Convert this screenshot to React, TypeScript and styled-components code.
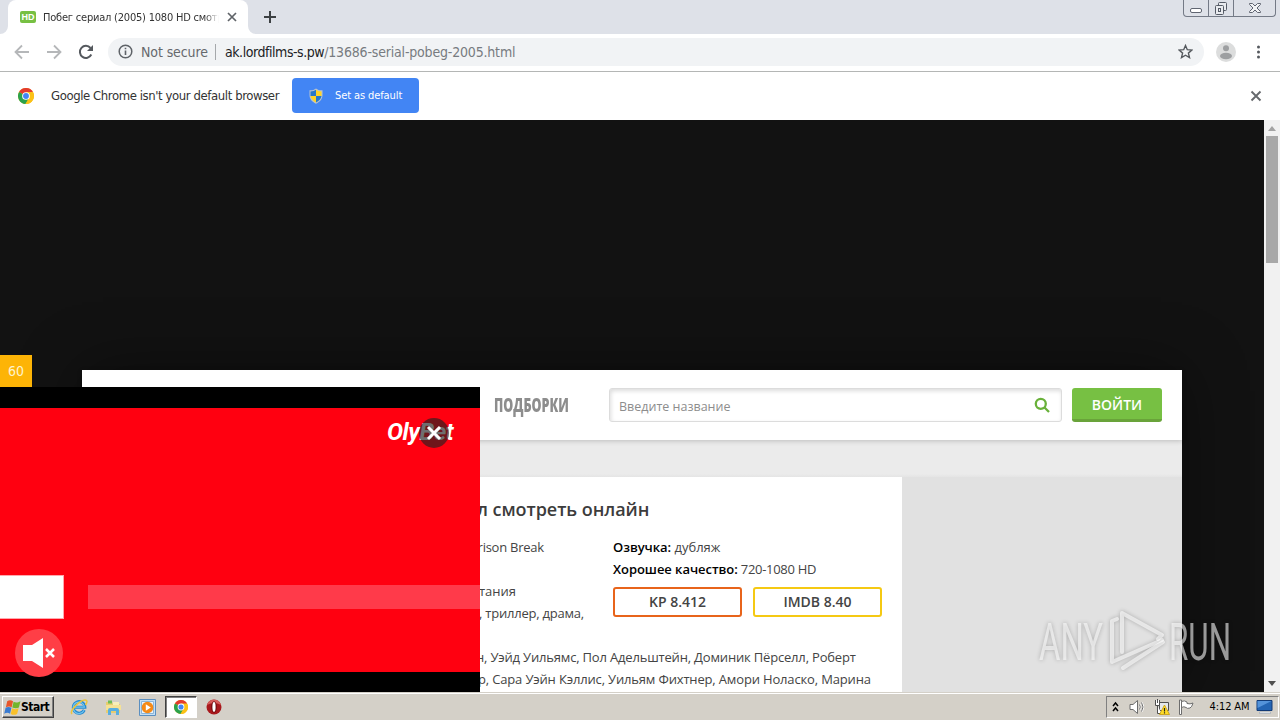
import React from 'react';
import styled, { createGlobalStyle, css } from 'styled-components';

const GlobalStyle = createGlobalStyle`
  * { box-sizing: border-box; }
  body {
    margin: 0;
    overflow: hidden;
    background: #111;
  }
`;

const uiFont = `'DejaVu Sans Condensed', 'DejaVu Sans', Tahoma, sans-serif`;
const siteFont = `'Open Sans', 'Noto Sans', sans-serif`;

const Screen = styled.div`
  position: relative;
  width: 1280px;
  height: 720px;
  display: flex;
  flex-direction: column;
  overflow: hidden;
  font-family: ${uiFont};
`;

const Label = styled.span<{ $size?: number; $spacing?: number; $color?: string }>`
  font-size: ${props => props.$size || 12}px;
  letter-spacing: ${props => props.$spacing || 0}px;
  color: ${props => props.$color || '#333'};
  white-space: nowrap;
`;

/* ---------- browser frame ---------- */

const TabStrip = styled.div`
  height: 34px;
  flex: none;
  display: flex;
  align-items: flex-start;
  background: #dee1e8;
`;

const TabCurve = styled.svg`
  width: 8px;
  height: 34px;
  flex: none;
`;

const Tab = styled.div`
  width: 240px;
  height: 34px;
  padding: 0 10px 0 12px;
  display: flex;
  align-items: center;
  background: #fff;
  border-radius: 8px 8px 0 0;
`;

const Favicon = styled.div`
  width: 16px;
  height: 12px;
  flex: none;
  margin-right: 7px;
  border-radius: 2px;
  background: #77c043;
  color: #fff;
  font: bold 9px/12px 'Liberation Sans', sans-serif;
  text-align: center;
`;

const TabTitle = styled.div`
  width: 176px;
  overflow: hidden;
  display: flex;
  mask-image: linear-gradient(90deg, #000 92%, transparent);
`;

const TabClose = styled.svg`
  margin-left: 8px;
  flex: none;
`;

const NewTab = styled.svg`
  margin: 11px 0 0 8px;
`;

const WindowControls = styled.div`
  display: flex;
  width: 93px;
  height: 17px;
  margin: 0 4px 0 auto;
  border: 1px solid #747a86;
  border-top: 0;
  border-radius: 0 0 4px 4px;
`;

const WindowButton = styled.div<{ $width: number }>`
  width: ${props => props.$width}px;
  display: flex;
  justify-content: center;
  border-right: 1px solid #747a86;

  &:last-child {
    border-right: 0;
  }
`;

const Toolbar = styled.div`
  height: 38px;
  flex: none;
  display: flex;
  align-items: center;
  padding: 0 14px 2px 14px;
  background: #fff;
  border-bottom: 1px solid #b4b6b5;
`;

const NavIcons = styled.div`
  display: flex;
  gap: 16px;
  width: 94px;
`;

const AddressBar = styled.div`
  width: 1096px;
  height: 28px;
  display: flex;
  align-items: center;
  padding: 0 11px 0 10px;
  border-radius: 14px;
  background: #f1f3f5;
`;

const Security = styled.div`
  width: 74px;
  margin-left: 8px;
  display: flex;
`;

const Divider = styled.div`
  width: 1px;
  height: 16px;
  margin-right: 9px;
  background: #a5a8ab;
`;

const Star = styled.svg`
  margin-left: auto;
`;

const Avatar = styled.svg`
  margin-left: 12px;
`;

const Menu = styled.svg`
  margin-left: 20px;
`;

const InfoBar = styled.div`
  height: 48px;
  flex: none;
  display: flex;
  align-items: center;
  padding: 0 18px 1px;
  background: #fff;
`;

const InfoText = styled.div`
  width: 258px;
  padding-left: 17px;
  display: flex;
`;

const DefaultButton = styled.button`
  width: 127px;
  height: 35px;
  padding: 0 0 0 17px;
  display: flex;
  align-items: center;
  gap: 12px;
  border: 0;
  border-radius: 4px;
  background: #4285f4;
  font-family: inherit;
`;

const InfoClose = styled.svg`
  margin-left: auto;
`;

/* ---------- site ---------- */

const Viewport = styled.div`
  position: relative;
  height: 572px;
  flex: none;
  display: flex;
  overflow: hidden;
  background: #121212;
`;

const Page = styled.div`
  flex: 1;
  padding: 250px 82px 0;
`;

const Site = styled.div`
  height: 322px;
  width: 1100px;
  background: #e1e1e1;
  font-family: ${siteFont};
  box-shadow: 0 0 60px rgba(0, 0, 0, 0.4);
`;

const SiteHeader = styled.div`
  position: relative;
  height: 70px;
  display: flex;
  align-items: center;
  padding-left: 412px;
  background: #fff;
  box-shadow: 0 1px 5px rgba(0, 0, 0, 0.2);
`;

const NavLink = styled.div`
  width: 115px;
  height: 28px;

  span {
    display: block;
    font: 800 19px/28px 'Open Sans', sans-serif;
    color: #8d8d8d;
    transform: scaleX(0.66);
    transform-origin: left;
    white-space: nowrap;
  }
`;

const SearchBox = styled.div`
  width: 453px;
  height: 34px;
  display: flex;
  align-items: center;
  justify-content: space-between;
  padding: 2px 11px 0 9px;
  border: 1px solid #dcdcdc;
  border-radius: 3px;
  background: #fff;
  box-shadow: inset 1px 2px 4px rgba(0, 0, 0, 0.14);

  svg {
    margin-bottom: 2px;
  }
`;

const LoginButton = styled.button`
  width: 90px;
  height: 34px;
  margin-left: 10px;
  padding: 2px 0 0;
  border: 0;
  border-bottom: 3px solid #69a33a;
  border-radius: 3px;
  background: #77c043;
  color: #fff;
  font: 600 14px/29px ${siteFont};
`;

const SubBar = styled.div`
  height: 37px;
  background: linear-gradient(#ebebeb 34px, #e4e4e4);
`;

const Article = styled.div`
  position: relative;
  width: 820px;
  height: 215px;
  padding: 19px 0 0 398px;
  background: #fff;
`;

const Title = styled.h1`
  margin: 0 0 14px -3px;
  font: 600 18px/26px ${siteFont};
  letter-spacing: -0.05px;
  color: #3c3c3c;
  white-space: nowrap;
`;

const Columns = styled.div`
  display: flex;
  height: 88px;
`;

const Column = styled.div<{ $width: number }>`
  width: ${props => props.$width}px;
`;

const Line = styled.div<{ $shift?: number; $spacing?: number }>`
  height: 22px;
  margin-left: ${props => props.$shift || 0}px;
  font-size: 13px;
  line-height: 22px;
  letter-spacing: ${props => props.$spacing || 0}px;
  color: #444;
  white-space: pre;

  b {
    font-weight: 600;
    letter-spacing: -0.05px;
    color: #000;
  }
`;

const Ratings = styled.div`
  display: flex;
  gap: 11px;
  margin-top: 7px;
`;

const Rating = styled.div<{ $color: string }>`
  width: 129px;
  height: 30px;
  border: 2px solid ${props => props.$color};
  border-radius: 3px;
  font: 600 14px/26px ${siteFont};
  color: #444;
  text-align: center;
`;

const Cast = styled.div`
  margin-top: 22px;
`;

const Scrollbar = styled.div`
  width: 16px;
  display: flex;
  flex-direction: column;
  align-items: center;
  background: #f1f1f1;
`;

const Thumb = styled.div`
  width: 12px;
  height: 127px;
  margin-bottom: auto;
  background: #a8a8a8;
`;

/* ---------- floating ad ---------- */

const Ad = styled.div`
  position: absolute;
  left: 0;
  bottom: 0;
  width: 480px;
`;

const Countdown = styled.div`
  width: 32px;
  height: 32px;
  background: #fdb406;
  color: #fff3cc;
  font: 14px/32px ${uiFont};
  text-align: center;
`;

const AdVideo = styled.div`
  position: relative;
  height: 305px;
  border-top: 21px solid #000;
  border-bottom: 20px solid #000;
  background: #ff0010;
`;

const AdStrip = styled.div`
  display: flex;
  align-items: center;
  gap: 24px;
  padding-top: 167px;
`;

const AdBox = styled.div`
  width: 64px;
  height: 44px;
  background: #fff;
  border: 1px solid #ffa8ad;
  border-left: 0;
`;

const AdBar = styled.div`
  flex: 1;
  height: 24px;
  background: #ff3a4a;
`;

const AdBrand = styled.div`
  position: absolute;
  top: 8px;
  left: 387px;
  color: #fff;
  font: italic bold 24px/32px Roboto, sans-serif;
  letter-spacing: -0.5px;
  white-space: nowrap;
`;

const AdClose = styled.svg`
  position: absolute;
  top: 10px;
  left: 419px;
`;

const Mute = styled.svg`
  position: absolute;
  left: 15px;
  bottom: -5px;
`;

const Watermark = styled.svg`
  position: absolute;
  right: 42px;
  top: 604px;
  overflow: visible;
  filter: drop-shadow(0 0 2px rgba(0, 0, 0, 0.4));

  text {
    font: 400 52px Roboto, sans-serif;
  }
`;

/* ---------- taskbar ---------- */

const Taskbar = styled.div`
  height: 28px;
  flex: none;
  display: flex;
  align-items: center;
  padding: 2px 1px 0 2px;
  background: #d4d0c8;
  box-shadow: inset 0 1px #d4d0c8, inset 0 2px #fff;
`;

const raised = css`
  border: 1px solid;
  border-color: #fff #404040 #404040 #fff;
  box-shadow: inset -1px -1px #808080;
`;

const StartButton = styled.div`
  width: 52px;
  height: 22px;
  display: flex;
  align-items: center;
  padding-left: 1px;
  ${raised}
  font: bold 12px/20px 'DejaVu Sans Condensed', sans-serif;
  letter-spacing: -0.5px;
  color: #000;
`;

const QuickLaunch = styled.div`
  display: flex;
  align-items: center;
  margin-left: 8px;
`;

const LaunchItem = styled.div<{ $active?: boolean }>`
  width: ${props => (props.$active ? 32 : 34)}px;
  height: 22px;
  display: flex;
  align-items: center;
  justify-content: center;
  ${props => props.$active && css`
    margin-left: 1px;
    background: #fff;
    border: 1px solid;
    border-color: #404040 #fff #fff #404040;
    box-shadow: inset 1px 1px #808080;
  `}
`;

const Tray = styled.div`
  height: 22px;
  width: 173px;
  margin-left: auto;
  display: flex;
  align-items: center;
  padding-left: 5px;
  border: 1px solid;
  border-color: #808080 #fff #fff #808080;
`;

const TrayIcons = styled.div`
  width: 94px;
  display: flex;
  align-items: center;
  gap: 8px;

  svg:first-child {
    margin-right: 2px;
  }
`;

const Clock = styled.div`
  width: 53px;
  margin-left: -3px;
  font: 11px/20px ${uiFont};
  letter-spacing: -0.1px;
  color: #000;
  text-align: center;
  white-space: nowrap;
`;

const ChromeIcon = ({ size }: { size: number }) => (
  <svg width={size} height={size} viewBox="0 0 24 24">
    <circle cx="12" cy="12" r="12" fill="#fbc116" />
    <path d="M12 12 1.6 6A12 12 0 0 1 22.4 6Z" fill="#e33b2e" />
    <path d="M12 12 1.6 6A12 12 0 0 0 11 24l5.5-9.5Z" fill="#2ba24c" />
    <path d="M12 6h10.4A12 12 0 0 1 12 24l5-9Z" fill="#fbc116" />
    <circle cx="12" cy="12" r="5.8" fill="#fff" />
    <circle cx="12" cy="12" r="4.4" fill="#4285f4" />
  </svg>
);

const Shield = () => (
  <svg width="14" height="16" viewBox="0 0 14 16">
    <path d="M7 .5C9 2 11 2.500 13.500 2.300V7c0 4-2.500 6.800-6.500 8.700C3 13.800.5 11 .5 7V2.300C3 2.500 5 2 7 .5Z" fill="#b9c4cf" />
    <path d="M7 1.800V8H1.500V3.400Q5 3.300 7 1.800" fill="#2878c8" />
    <path d="M7 1.800Q9 3.300 12.500 3.400V8H7Z" fill="#ffd426" />
    <path d="M1.500 8H7v6.500C4 13 2 11 1.500 8Z" fill="#ffd426" />
    <path d="M12.500 8H7v6.500c3-1.500 5-3.500 5.500-6.500Z" fill="#2878c8" />
  </svg>
);

const WindowsFlag = () => (
  <svg width="17" height="17" viewBox="0 0 16 16">
    <path d="M3 2c2-1.300 3.800-1 5.500 0L7.200 7.700c-1.600-1-3.400-1-5.400 0Z" fill="#e8562a" />
    <path d="M9 2.500c2 1 3.800 1 6.500-.5L14 8c-1.700 1-4 1-6.200 0Z" fill="#73b52c" />
    <path d="M1.500 8.300c1.800-1 3.600-1 5.500 0l-1.300 5.500c-1.700-1-3.500-1-5.500 0Z" fill="#3a7bd0" />
    <path d="M7.600 8.800c2 1 3.800 1 6.200 0L12.300 14c-2.300 1.300-4.100 1.200-6 0Z" fill="#f9c02a" />
  </svg>
);

const Explorer = () => (
  <svg width="18" height="18" viewBox="0 0 18 18" fill="none">
    <path d="M14.300 12a5.800 5.800 0 1 1 .6-2.800H5" stroke="#2489cf" strokeWidth="3" />
    <path d="M14 12.200a5.700 5.700 0 1 1 .5-3H5" stroke="#72c5ef" strokeWidth="1.200" />
    <path d="M2 16c-3-3 8-14 13-14 3 0 2 3 .5 5" stroke="#edc53b" strokeWidth="1.500" />
  </svg>
);

const Folder = () => (
  <svg width="17" height="17" viewBox="0 0 17 17">
    <path d="M1 3h6l1 2h7v9H1Z" fill="#e6cd70" />
    <path d="M3 1.500h4v3H3Z" fill="#6ebd55" />
    <path d="M8 3h6v4H8Z" fill="#f7eeb9" />
    <path d="M1 6h15v5H1Z" fill="#f5e295" />
    <path d="M3 16v-5q0-2 2-2h7q2 0 2 2v5h-3v-4H6v4Z" fill="#58aee0" />
  </svg>
);

const MediaPlayer = () => (
  <svg width="17" height="17" viewBox="0 0 17 17">
    <path d="M.5.5h16v16H.5Z" fill="#c4dff4" stroke="#5b8fc0" />
    <path d="M2.500 2.500h12v12h-12Z" fill="#e9f3fb" stroke="#8ab5d9" />
    <circle cx="8.500" cy="8.500" r="5.800" fill="#f58a16" />
    <path d="m6.800 5.200 5 3.300-5 3.300Z" fill="#fff" />
  </svg>
);

const Opera = () => (
  <svg width="16" height="16" viewBox="0 0 16 16">
    <circle cx="8" cy="8" r="7.500" fill="#a8181c" />
    <path d="M1 6a7.300 7.300 0 0 1 14 0Q8 2 1 6" fill="#d65c5a" />
    <ellipse cx="8" cy="8" rx="2.800" ry="5.700" fill="#6e0b0e" />
    <ellipse cx="8" cy="8" rx="1.600" ry="4.900" fill="#fff" />
  </svg>
);

const Chevrons = () => (
  <svg width="7" height="12" viewBox="0 0 7 12" fill="none" stroke="#000" strokeWidth="1.500">
    <path d="m1 5 2.500-3L6 5M1 10l2.500-3L6 10" />
  </svg>
);

const Speaker = () => (
  <svg width="17" height="16" viewBox="0 0 17 16" fill="none" stroke="#6d6d6d">
    <path d="M1 5.500h3L8.500 1.500v13L4 10.500H1Z" fill="#fff" />
    <path d="M10.500 5.500q1.500 2.500 0 5M12.500 3.500q3 4.500 0 9" stroke="#fff" strokeWidth="2" />
    <path d="M10.500 5.500q1.500 2.500 0 5M12.500 3.500q3 4.500 0 9" />
  </svg>
);

const Network = () => (
  <svg width="16" height="16" viewBox="0 0 16 16">
    <path d="M5.500 3.500h9v8h-9Z" fill="#e4e7ea" stroke="#4f4f4f" />
    <path d="M1.500 1v5.500h4V1M3.500 6.500v8h4" fill="#fff" stroke="#4f4f4f" />
    <path d="M3.500 0v4" stroke="#4f4f4f" />
    <path d="m10.500 6 5 9.500h-10Z" fill="#ffdc26" stroke="#c59a0c" strokeWidth="0.800" />
    <path d="M10.500 9v3.500M10.500 13.300v1.200" stroke="#222" strokeWidth="1.200" />
  </svg>
);

const ActionFlag = () => (
  <svg width="16" height="16" viewBox="0 0 16 16" fill="#fff" stroke="#6d6d6d">
    <path d="M1.500 1h2v14.500h-2Z" />
    <path d="M3.500 2.500q3-1.500 5.500.5v1.500q3 1 6-.5-1 4-3 5-3 1-4-.5-2-1.500-4.500 0Z" />
  </svg>
);

const Desktop = () => (
  <svg width="17" height="14" viewBox="0 0 16 14">
    <path d="M.5.5h15v10H.5Z" fill="#2465b4" stroke="#123b77" />
    <path d="M1 1h14L1 8Z" fill="#5493da" />
    <path d="M3 12h11v1.500H3Z" fill="#f5f5f5" stroke="#8b98a8" strokeWidth="0.500" />
  </svg>
);

const App: React.FC = () => {
  return (
    <Screen>
      <GlobalStyle />
      <TabStrip>
        <TabCurve viewBox="0 0 8 34"><path d="M8 26v8H0a8 8 0 0 0 8-8" fill="#fff" /></TabCurve>
        <Tab>
          <Favicon>HD</Favicon>
          <TabTitle>
            <Label $size={11} $spacing={-0.21}>Побег сериал (2005) 1080 HD смотр</Label>
          </TabTitle>
          <TabClose width="10" height="10" viewBox="0 0 10 10">
            <path d="m1 1 8 8M9 1 1 9" stroke="#5f6368" strokeWidth="1.700" />
          </TabClose>
        </Tab>
        <TabCurve viewBox="0 0 8 34"><path d="M0 26v8h8a8 8 0 0 1-8-8" fill="#fff" /></TabCurve>
        <NewTab width="12" height="12" viewBox="0 0 12 12">
          <path d="M6 0v12M0 6h12" stroke="#3c4043" strokeWidth="2" />
        </NewTab>
        <WindowControls>
          <WindowButton $width={25}>
            <svg width="14" height="16"><rect x="1.500" y="8.500" width="11" height="4" rx="1.500" fill="#fff" stroke="#606571" /></svg>
          </WindowButton>
          <WindowButton $width={25}>
            <svg width="14" height="16" fill="#e9ebef" stroke="#555b66">
              <rect x="4.500" y="2.500" width="8" height="8" rx="1" />
              <rect x="1.500" y="5.500" width="8" height="9" rx="1" />
              <rect x="4.500" y="8.500" width="2" height="3" />
            </svg>
          </WindowButton>
          <WindowButton $width={41}>
            <svg width="14" height="16" fill="#f2f3f5" stroke="#606571">
              <path d="M1.500 3.500h3L7 6l2.500-2.500h3v1L9 8l3.500 3.500v1h-3L7 10l-2.500 2.500h-3v-1L5 8 1.500 4.500Z" />
            </svg>
          </WindowButton>
        </WindowControls>
      </TabStrip>
      <Toolbar>
        <NavIcons>
          <svg width="16" height="16" viewBox="0 0 16 16" fill="none" stroke="#b5b7b9" strokeWidth="1.800"><path d="M15 8H2M8 1.500 1.500 8 8 14.500" /></svg>
          <svg width="16" height="16" viewBox="0 0 16 16" fill="none" stroke="#b5b7b9" strokeWidth="1.800"><path d="M1 8h13M8 1.500 14.500 8 8 14.500" /></svg>
          <svg width="16" height="16" viewBox="0 0 16 16"><path d="M13.300 10.500A6 6 0 1 1 12.500 4" fill="none" stroke="#55595e" strokeWidth="2" /><path d="M15 1v6H9Z" fill="#55595e" /></svg>
        </NavIcons>
        <AddressBar>
          <svg width="15" height="15" viewBox="0 0 15 15"><circle cx="7.500" cy="7.500" r="6.300" fill="none" stroke="#5f6368" strokeWidth="1.500" /><path d="M7.500 6.500V11M7.500 3.700v1.600" stroke="#5f6368" strokeWidth="1.600" /></svg>
          <Security><Label $size={14} $spacing={-0.1} $color="#66696d">Not secure</Label></Security>
          <Divider />
          <Label $size={14} $spacing={-0.45} $color="#202124">ak.lordfilms-s.pw</Label>
          <Label $size={14} $spacing={-0.18} $color="#777b80">/13686-serial-pobeg-2005.html</Label>
          <Star width="15" height="15" viewBox="0 0 15 15">
            <path d="m7.500 1.500 1.800 4.200 4.600.4-3.500 3 1.100 4.500-4-2.400-4 2.400 1.100-4.500-3.500-3 4.600-.4Z" fill="none" stroke="#55595e" strokeWidth="1.400" />
          </Star>
        </AddressBar>
        <Avatar width="20" height="20" viewBox="0 0 20 20">
          <circle cx="10" cy="10" r="10" fill="#dcdddd" />
          <circle cx="10" cy="6.300" r="3" fill="#9d9fa1" />
          <ellipse cx="10" cy="14" rx="6" ry="3.200" fill="#9d9fa1" />
        </Avatar>
        <Menu width="5" height="14" viewBox="0 0 5 14" fill="#55595e">
          <circle cx="2.500" cy="2" r="1.500" /><circle cx="2.500" cy="7" r="1.500" /><circle cx="2.500" cy="12" r="1.500" />
        </Menu>
      </Toolbar>
      <InfoBar>
        <ChromeIcon size={16} />
        <InfoText><Label $size={13} $spacing={-0.41}>Google Chrome isn't your default browser</Label></InfoText>
        <DefaultButton><Shield /><Label $size={11} $spacing={-0.1} $color="#fff">Set as default</Label></DefaultButton>
        <InfoClose width="12" height="12" viewBox="0 0 12 12"><path d="m1.500 1.500 9 9M10.500 1.500l-9 9" stroke="#66696d" strokeWidth="1.900" /></InfoClose>
      </InfoBar>
      <Viewport>
        <Page>
          <Site>
            <SiteHeader>
              <NavLink><span>ПОДБОРКИ</span></NavLink>
              <SearchBox>
                <Label $size={12.5} $color="#8d8d8d">Введите название</Label>
                <svg width="16" height="16" viewBox="0 0 16 16" fill="none" stroke="#69b13a" strokeWidth="2.300"><circle cx="6.800" cy="6.800" r="5" /><path d="m10.500 10.500 4.500 4.500" /></svg>
              </SearchBox>
              <LoginButton>ВОЙТИ</LoginButton>
            </SiteHeader>
            <SubBar />
            <Article>
              <Title>л смотреть онлайн</Title>
              <Columns>
                <Column $width={133}>
                  <Line $shift={-10} $spacing={-0.25}>Prison Break</Line>
                  <Line> </Line>
                  <Line $shift={-1}>тания</Line>
                  <Line $shift={-1} $spacing={-0.22}>, триллер, драма,</Line>
                </Column>
                <Column $width={280}>
                  <Line><b>Озвучка:</b> дубляж</Line>
                  <Line $spacing={-0.3}><b>Хорошее качество:</b> 720-1080 HD</Line>
                  <Ratings>
                    <Rating $color="#e8641b">KP 8.412</Rating>
                    <Rating $color="#f5c913">IMDB 8.40</Rating>
                  </Ratings>
                </Column>
              </Columns>
              <Cast>
                <Line $shift={-4} $spacing={-0.18}>н, Уэйд Уильямс, Пол Адельштейн, Доминик Пёрселл, Роберт</Line>
                <Line $shift={-2} $spacing={-0.16}>р, Сара Уэйн Кэллис, Уильям Фихтнер, Амори Ноласко, Марина</Line>
              </Cast>
            </Article>
          </Site>
        </Page>
        <Scrollbar>
          <svg width="16" height="16"><path d="m4 11 4-5 4 5Z" fill="#a3a3a3" /></svg>
          <Thumb />
          <svg width="16" height="17"><path d="m4 6 4 5 4-5Z" fill="#505050" /></svg>
        </Scrollbar>
        <Ad>
          <Countdown>60</Countdown>
          <AdVideo>
            <AdStrip><AdBox /><AdBar /></AdStrip>
            <AdBrand>OlyBet</AdBrand>
            <AdClose width="30" height="30" viewBox="0 0 30 30">
              <circle cx="15" cy="15" r="15" fill="#222" fillOpacity="0.65" />
              <path d="m9 9 12 12M21 9 9 21" stroke="#fff" strokeWidth="3" />
            </AdClose>
            <Mute width="48" height="48" viewBox="0 0 48 48">
              <circle cx="24" cy="24" r="24" fill="#ff3e46" />
              <path d="M8 16h9l11-7v30l-11-7H8Z" fill="#fff" />
              <path d="m31 20 8 8M39 20l-8 8" stroke="#fff" strokeWidth="2.500" />
            </Mute>
          </AdVideo>
        </Ad>
      </Viewport>
      <Taskbar>
        <StartButton><WindowsFlag />Start</StartButton>
        <QuickLaunch>
          <LaunchItem><Explorer /></LaunchItem>
          <LaunchItem><Folder /></LaunchItem>
          <LaunchItem><MediaPlayer /></LaunchItem>
          <LaunchItem $active><ChromeIcon size={14} /></LaunchItem>
          <LaunchItem><Opera /></LaunchItem>
        </QuickLaunch>
        <Tray>
          <TrayIcons>
            <Chevrons />
            <Speaker />
            <Network />
            <ActionFlag />
          </TrayIcons>
          <Clock>4:12 AM</Clock>
          <Desktop />
        </Tray>
      </Taskbar>
      <Watermark width="198" height="72" viewBox="0 0 198 72" fill="#fff" fillOpacity="0.58">
        <text x="-1" y="56" textLength="64" lengthAdjust="spacingAndGlyphs">ANY</text>
        <text x="129" y="56" textLength="62" lengthAdjust="spacingAndGlyphs">RUN</text>
        <g fill="none" stroke="#fff" strokeOpacity="0.6" strokeWidth="4" strokeLinejoin="round" strokeLinecap="round">
          <path d="M82 48V9l40 22-4 4" />
          <path d="M77 15l-5 2v41l50-22" />
          <path d="M83 64l40-26" />
        </g>
      </Watermark>
    </Screen>
  );
};

export default App;
